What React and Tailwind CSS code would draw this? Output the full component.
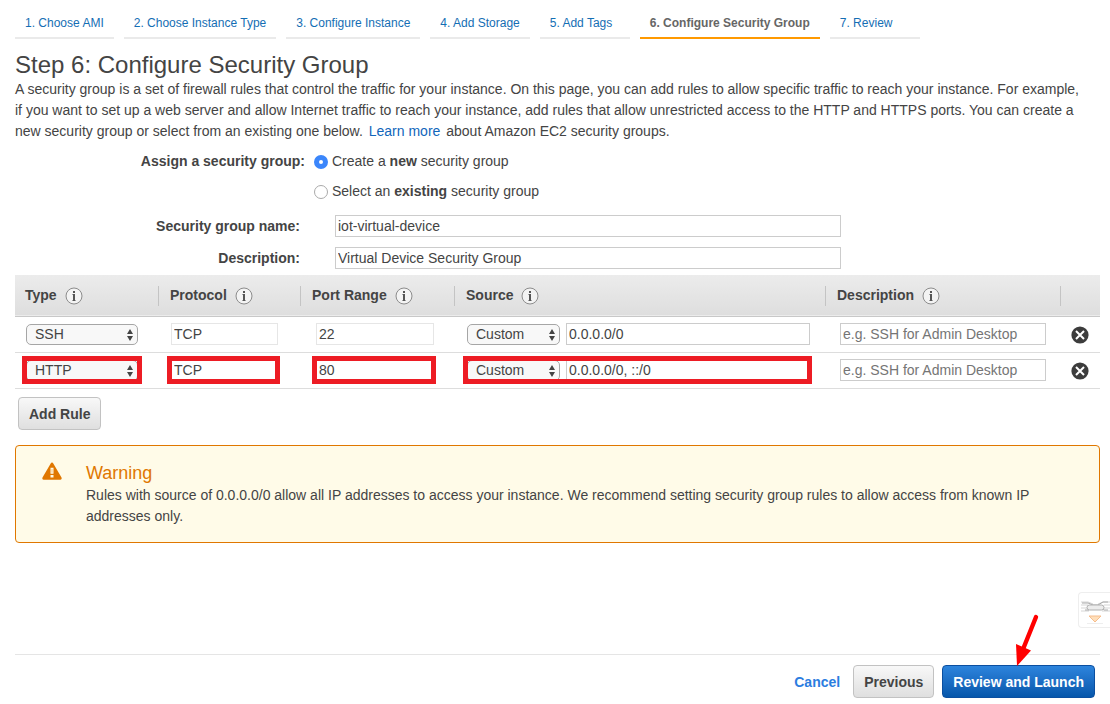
import React from "react";

const steps = [
  "1. Choose AMI",
  "2. Choose Instance Type",
  "3. Configure Instance",
  "4. Add Storage",
  "5. Add Tags",
  "6. Configure Security Group",
  "7. Review",
];

const rules = [
  { id: "ssh", type: "SSH", protocol: "TCP", port: "22", source: "0.0.0.0/0", marked: false },
  { id: "http", type: "HTTP", protocol: "TCP", port: "80", source: "0.0.0.0/0, ::/0", marked: true },
];

function Wizard() {
  return (
    <nav aria-label="Wizard steps" className="flex gap-[10px] pl-[15px] pt-[15px] text-[12px] leading-[16px]">
      {steps.map((step, i) => {
        const active = i === 5;
        return (
          <a
            key={step}
            href="#"
            aria-current={active ? "step" : undefined}
            className={
              active
                ? "h-6 min-w-[90px] whitespace-nowrap border-b-2 border-[#ff9900] px-[10px] font-bold text-[#666]"
                : "h-6 min-w-[90px] whitespace-nowrap border-b-2 border-[#eaeaea] px-[10px] text-[#146eb4]"
            }
          >
            {step}
          </a>
        );
      })}
    </nav>
  );
}

function InfoButton({ label }) {
  return (
    <button type="button" aria-label={`About ${label}`} className="block">
      <svg viewBox="0 0 18 18" className="block h-[18px] w-[18px]">
        <circle cx="9" cy="9" r="8" fill="#f3f3f3" stroke="#8c8c8c" strokeWidth="1" />
        <rect x="8" y="4" width="2" height="2" fill="#555" />
        <rect x="8" y="7" width="2" height="7" fill="#555" />
        <path d="M7 7.500h2M7 13.500h4" stroke="#555" strokeOpacity="0.5" />
      </svg>
    </button>
  );
}

function HeadCell({ children, divider }) {
  return (
    <th scope="col" className="h-[41px] p-0 pb-[10px] text-left align-bottom font-bold">
      <div className={divider ? "flex h-5 items-center gap-2 border-l border-[#c4c4c4] pl-[11px]" : "flex h-5 items-center gap-2 pl-[10px]"}>
        {children && (
          <>
            <span className="whitespace-nowrap">{children}</span>
            <InfoButton label={children} />
          </>
        )}
      </div>
    </th>
  );
}

function Select({ label, value, options }) {
  return (
    <div className="relative w-full">
      <select
        aria-label={label}
        defaultValue={value}
        className="block h-[21px] w-full appearance-none rounded-[5px] border border-[#a6a6a6] bg-[#f8f8f8] pl-2 pr-4 text-[14px] leading-[19px] text-[#444]"
      >
        {options.map((o) => (
          <option key={o}>{o}</option>
        ))}
      </select>
      <svg viewBox="0 0 6 12" className="pointer-events-none absolute right-[5px] top-[5px] h-3 w-[6px]">
        <path d="M3 0L6 5H0zM3 12L0 7h6z" fill="#444" />
      </svg>
    </div>
  );
}

function Mark({ on, children, className }) {
  return (
    <div className={`relative ${className}`}>
      {children}
      {on && <span className="pointer-events-none absolute -bottom-[3px] -left-1 -right-[2px] -top-[3px] border-[5px] border-[#ed1c24]" />}
    </div>
  );
}

const field = "block h-[22px] w-full min-w-0 rounded-none border bg-white px-[2px] text-[14px] leading-5 text-[#444] outline-none placeholder:text-[#757575]";

function RuleRow({ rule }) {
  return (
    <tr className="h-9 border-b border-[#ddd]">
      <td className="p-0 pl-[11px]">
        <Mark on={rule.marked} className="w-[114px]">
          <div className="w-28 pt-px">
            <Select label="Type" value={rule.type} options={["SSH", "HTTP", "HTTPS"]} />
          </div>
        </Mark>
      </td>
      <td className="p-0 pl-[13px]">
        <Mark on={rule.marked} className="w-[107px]">
          <input aria-label="Protocol" readOnly defaultValue={rule.protocol} className={`${field} border-[#e6e6e6]`} />
        </Mark>
      </td>
      <td className="p-0 pl-4">
        <Mark on={rule.marked} className="w-[118px]">
          <input aria-label="Port range" readOnly defaultValue={rule.port} className={`${field} border-[#e6e6e6]`} />
        </Mark>
      </td>
      <td className="p-0 pl-[13px] pr-[15px]">
        <Mark on={rule.marked} className="flex gap-[6px]">
          <div className="w-[93px] shrink-0 pt-px">
            <Select label="Source type" value="Custom" options={["Custom", "Anywhere", "My IP"]} />
          </div>
          <input aria-label="Source" defaultValue={rule.source} className={`${field} border-[#ccc]`} />
        </Mark>
      </td>
      <td className="p-0 pl-[15px] pr-[14px]">
        <input aria-label="Rule description" placeholder="e.g. SSH for Admin Desktop" className={`${field} border-[#ccc]`} />
      </td>
      <td className="p-0 pl-[11px]">
        <button type="button" aria-label={`Delete ${rule.type} rule`} className="block pt-px">
          <svg viewBox="0 0 18 18" className="block h-[18px] w-[18px]">
            <circle cx="9" cy="9" r="8.6" fill="#3c3c3c" />
            <path d="M5 5l8 8M13 5l-8 8" stroke="#fff" strokeWidth="2" />
          </svg>
        </button>
      </td>
    </tr>
  );
}

const greyButton = "h-[33px] rounded-[4px] border border-[#c2c2c2] bg-linear-to-b from-[#f8f8f8] to-[#dfdfdf] px-[10px] pt-px text-[14px] font-bold leading-5 text-[#444]";

export default function App() {
  return (
    <div className="relative flex min-h-screen flex-col overflow-x-hidden bg-white font-['Liberation_Sans',Arial,sans-serif] text-[14px] leading-[21px] text-[#444]">
      <Wizard />
      <main className="pl-[15px] pr-[10px]">
        <h1 className="pt-3 text-[24px] leading-7">Step 6: Configure Security Group</h1>
        <p className="pr-4">
          A security group is a set of firewall rules that control the traffic for your instance. On this page, you can add
          rules to allow specific traffic to reach your instance. For example, if you want to set up a web server and allow
          Internet traffic to reach your instance, add rules that allow unrestricted access to the HTTP and HTTPS ports. You
          can create a new security group or select from an existing one below.{" "}
          <a href="#" className="mx-[2px] text-[#1166bb]">Learn more</a> about Amazon EC2 security groups.
        </p>

        <form>
          <fieldset className="flex gap-[9px] pt-[9px]">
            <legend className="float-left w-[290px] text-right font-bold">Assign a security group:</legend>
            <div className="flex flex-col gap-[9px]">
              <label className="flex items-center gap-1">
                <input
                  type="radio"
                  name="group"
                  defaultChecked
                  className="h-[14px] w-[14px] appearance-none rounded-full border border-[#aaa] bg-white checked:border-[5px] checked:border-[#3b86fb]"
                />
                <span>Create a <b>new</b> security group</span>
              </label>
              <label className="flex items-center gap-1">
                <input
                  type="radio"
                  name="group"
                  className="h-[14px] w-[14px] appearance-none rounded-full border border-[#aaa] bg-white checked:border-[5px] checked:border-[#3b86fb]"
                />
                <span>Select an <b>existing</b> security group</span>
              </label>
            </div>
          </fieldset>
          <div className="mt-[13px] flex flex-col gap-[10px]">
            <div className="flex items-center gap-[35px]">
              <label htmlFor="name" className="w-[285px] text-right font-bold">Security group name:</label>
              <input id="name" defaultValue="iot-virtual-device" className={`${field} max-w-[506px] border-[#ccc]`} />
            </div>
            <div className="flex items-center gap-[35px]">
              <label htmlFor="desc" className="w-[285px] text-right font-bold">Description:</label>
              <input id="desc" defaultValue="Virtual Device Security Group" className={`${field} max-w-[506px] border-[#ccc]`} />
            </div>
          </div>
        </form>

        <table className="mt-[6px] w-full table-fixed border-collapse">
          <colgroup>
            <col className="w-[143px]" />
            <col className="w-[142px]" />
            <col className="w-[154px]" />
            <col />
            <col className="w-[235px]" />
            <col className="w-[40px]" />
          </colgroup>
          <thead className="border-b border-[#c8c8c8] bg-linear-to-b from-[#ececec] to-[#dedede]">
            <tr>
              <HeadCell>Type</HeadCell>
              <HeadCell divider>Protocol</HeadCell>
              <HeadCell divider>Port Range</HeadCell>
              <HeadCell divider>Source</HeadCell>
              <HeadCell divider>Description</HeadCell>
              <HeadCell divider />
            </tr>
          </thead>
          <tbody>
            {rules.map((rule) => (
              <RuleRow key={rule.id} rule={rule} />
            ))}
          </tbody>
        </table>

        <button type="button" className={`${greyButton} ml-[3px] mt-2`}>Add Rule</button>

        <section className="mt-[15px] flex rounded-[4px] border border-[#e07700] bg-[#fffbe8] pb-[15px] pl-[26px] pr-12 pt-4">
          <svg viewBox="0 0 20 18" className="h-[18px] w-5 shrink-0" aria-hidden="true">
            <path d="M10 0.5c.6 0 1 .3 1.3.9l8.2 14.2c.5 1 0 2.1-1.2 2.1H1.7C.5 17.700 0 16.600.5 15.600L8.700 1.400C9 .8 9.400.5 10 .5z" fill="#e07700" />
            <path d="M8.500 5.800h3v6h-3zM8.500 13h3v2.400h-3z" fill="#fffbe8" />
            <path d="M9.600 7h.8v3.800h-.8z" fill="#e07700" fillOpacity="0.5" />
          </svg>
          <div className="ml-6">
            <h2 className="text-[18px] leading-[23px] text-[#e07700]">Warning</h2>
            <p>
              Rules with source of 0.0.0.0/0 allow all IP addresses to access your instance. We recommend setting security
              group rules to allow access from known IP addresses only.
            </p>
          </div>
        </section>
      </main>

      <footer className="relative ml-[15px] mr-[10px] mt-auto flex items-center justify-end gap-2 border-t border-[#e5e5e5] pb-[6px] pr-[5px] pt-[10px]">
        <a href="#" className="mr-[5px] pt-px font-bold text-[#2b7de0]">Cancel</a>
        <button type="button" className={greyButton}>Previous</button>
        <button
          type="button"
          className="h-[33px] rounded-[4px] border border-[#0b4fa0] bg-linear-to-b from-[#2d84dd] to-[#0657ab] px-[10px] pt-px text-[14px] font-bold leading-5 text-white"
        >
          Review and Launch
        </button>
        <svg viewBox="0 0 24 54" className="pointer-events-none absolute right-[61px] top-[-42px] h-[54px] w-6" aria-hidden="true">
          <path d="M21 4L8.500 35" stroke="#f00" strokeWidth="4.4" strokeLinecap="round" />
          <path d="M1 31l15 6.500L2 53z" fill="#f00" />
        </svg>
      </footer>

      <button
        type="button"
        aria-label="Expand panel"
        className="absolute bottom-[76px] right-0 flex h-9 w-8 items-center justify-end rounded-l-[4px] border border-r-0 border-[#eee] bg-white"
      >
        <svg viewBox="0 0 30 34" className="h-[34px] w-[30px]">
          <path d="M1 9h7l5 2M1 12h7M1 15h6M1 18h8M30 9h-7l-5 2M30 12h-6M30 15h-6M30 18h-8" stroke="#d5d5d5" fill="none" />
          <path d="M2 10h6l5 2h5l5-3h5M5 17h4l2-3h10l3 3h4" stroke="#aaa" fill="none" />
          <rect x="7" y="12" width="17" height="5" rx="2.5" fill="#ececec" stroke="#b0b0b0" />
          <path d="M9 23h12l-6 6z" fill="#ffdfbb" stroke="#f6bd8c" />
          <path d="M7 30.500h16" stroke="#eee" />
        </svg>
      </button>
    </div>
  );
}
